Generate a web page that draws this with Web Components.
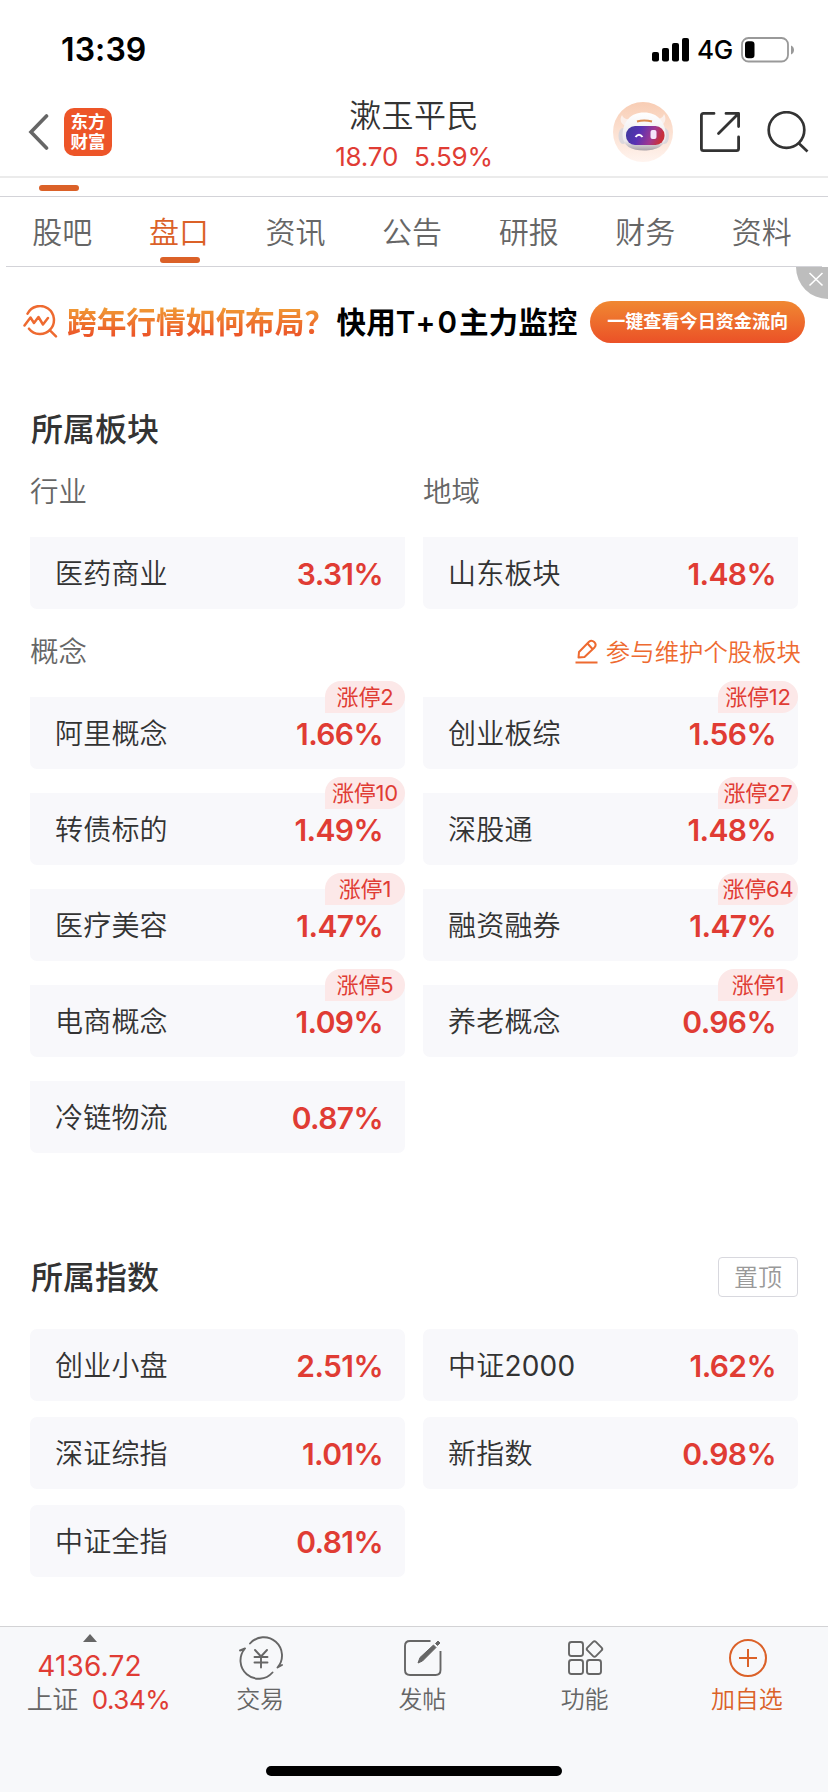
<!DOCTYPE html>
<html lang="zh-CN">
<head>
<meta charset="utf-8">
<title>漱玉平民</title>
<style>
html, body { margin: 0; }
body {
    width: 828px;
    height: 1792px;
    overflow: hidden;
    background: #fff;
    color: #333;
    font-family: Inter, "Noto Sans CJK SC", sans-serif;
}
</style>
</head>
<body>
<quote-page></quote-page>

<script>
"use strict";

// shared helper: opens the shadow root and fills it from a template
class BaseElement extends HTMLElement {
    constructor() {
        super();
        let tmpl = document.createElement('template');
        tmpl.innerHTML = this.render();
        this.attachShadow({mode: 'open'});
        this.shadowRoot.append(tmpl.content.cloneNode(true));
    }
}

class StatusBar extends BaseElement {
    render() {
        return `<style>
:host {
    display: flex;
    justify-content: space-between;
    align-items: center;
    box-sizing: border-box;
    height: 88px;
    padding: 11px 33px 0 61px;
    color: #000;
}
.time { padding-top: 1px; font-size: 32px; font-weight: 600; line-height: 40px; letter-spacing: 0.1px; }
.right { display: flex; align-items: center; gap: 8px; }
.net { padding-top: 1px; font-size: 26px; font-weight: 450; line-height: 30px; letter-spacing: -0.3px; }
svg { display: block; }
</style>
<span class="time">13:39</span>
<div class="right">
  <svg width="37" height="24" viewBox="0 0 37 24">
    <rect x="0" y="14" width="7" height="9.5" rx="2"/>
    <rect x="10" y="10" width="7" height="13.5" rx="2"/>
    <rect x="20" y="5" width="7" height="18.5" rx="2"/>
    <rect x="30" y="0" width="7" height="23.5" rx="2"/>
  </svg>
  <span class="net">4G</span>
  <svg width="54" height="26" viewBox="0 0 54 26">
    <rect x="1" y="1" width="46" height="23.5" rx="6.5" fill="none" stroke="#999" stroke-width="1.8"/>
    <rect x="4" y="4.200" width="9.500" height="17" rx="3.200"/>
    <path d="M50 8.500c4 1.600 4 7.400 0 9z" fill="#999"/>
  </svg>
</div>`;
    }
}

class AppHeader extends BaseElement {
    render() {
        return `<style>
:host {
    display: grid;
    grid-template-columns: 1fr auto 1fr;
    box-sizing: border-box;
    height: 90px;
    padding: 0 19px;
    border-bottom: 2px solid #ebebeb;
}
svg { display: block; }
.left { display: flex; align-items: center; gap: 15px; padding-left: 9px; }
.logo {
    display: grid;
    align-content: center;
    justify-content: center;
    width: 48px;
    height: 48px;
    border-radius: 10px;
    background: #ed5528;
    color: #fff;
    font-size: 17.5px;
    font-weight: 700;
    line-height: 20px;
}
.title { display: flex; flex-direction: column; align-items: center; padding-top: 8px; }
.name { font-size: 32px; line-height: 40px; font-weight: 350; letter-spacing: 0.4px; }
.price { display: flex; gap: 16px; margin-top: 5px; font-size: 26px; line-height: 32px; color: #e03c34; letter-spacing: -0.2px; }
.right { display: flex; justify-content: flex-end; align-items: center; gap: 26px; }
</style>
<div class="left">
  <svg width="21" height="36" viewBox="0 0 21 36"><path d="M18.500 2L3 18l15.500 16" fill="none" stroke="#666" stroke-width="3.600" stroke-linecap="round"/></svg>
  <div class="logo"><span>东方</span><span>财富</span></div>
</div>
<div class="title">
  <div class="name">漱玉平民</div>
  <div class="price"><span>18.70</span><span>5.59%</span></div>
</div>
<div class="right">
  <svg width="60" height="60" viewBox="0 0 60 60">
    <defs>
      <linearGradient id="bg" x2="0" y2="1"><stop offset="0" stop-color="#f8cdb4"/><stop offset="1" stop-color="#fff4ef"/></linearGradient>
      <linearGradient id="shell" x2="0" y2="1"><stop offset="0" stop-color="#fff"/><stop offset="0.75" stop-color="#ece9ec"/><stop offset="1" stop-color="#aaa2a8"/></linearGradient>
      <linearGradient id="visor" x2="1" y2="0.2"><stop offset="0" stop-color="#3d3a9c"/><stop offset="0.4" stop-color="#5832b4"/><stop offset="0.75" stop-color="#a03790"/><stop offset="1" stop-color="#c8303c"/></linearGradient>
    </defs>
    <circle cx="30" cy="30" r="30" fill="url(#bg)"/>
    <path d="M9 13c-3 5-1 9 4 11l5-7c-5 1-8-1-9-4zM51 12c3 5 1 10-4 12l-5-7c5 0 8-1 9-5z" fill="#fbefea"/>
    <ellipse cx="10" cy="34" rx="4.500" ry="8" fill="#dcd8dc"/>
    <ellipse cx="51.500" cy="34" rx="4.500" ry="8" fill="#dcd8dc"/>
    <path d="M31 10.500C17 10.500 10 20 9.500 33c0 11 9 15.500 21.500 15.500S53 44 53 33c-1-13-8-22.500-22-22.500z" fill="url(#shell)"/>
    <path d="M24 19.500q7-2 15 0" fill="none" stroke="#dc8b50" stroke-width="2"/>
    <rect x="13" y="24" width="38.500" height="19" rx="9" fill="url(#visor)"/>
    <path d="M22.500 35q3.500-4.500 7 0" fill="none" stroke="#fff" stroke-width="2"/>
    <rect x="37.500" y="28" width="6" height="9" rx="2" fill="#f4e4fa"/>
  </svg>
  <svg width="42" height="42" viewBox="0 0 42 42" fill="none" stroke="#333" stroke-width="2.800" stroke-linecap="round" stroke-linejoin="round">
    <path d="M15 2.400H4.500q-2.100 0-2.100 2.100V37.500q0 2.100 2.100 2.100H37.500q2.100 0 2.100-2.100V26"/>
    <path d="M27 2.400H39.600V15.500M39 3L19.500 22.500"/>
  </svg>
  <svg width="42" height="42" viewBox="0 0 42 42" fill="none" stroke="#333" stroke-width="2.700"><circle cx="19.500" cy="19" r="17.800"/><path d="M31.500 32L40.500 40.500"/></svg>
</div>`;
    }
}

class TabBar extends BaseElement {
    render() {
        return `<style>
:host { display: block; }
.prev { box-sizing: border-box; height: 19px; padding: 7px 0 0 39px; border-bottom: 1px solid #d3d3d8; }
.mark { width: 40px; height: 6px; margin-left: 2px; border-radius: 3px; background: #db6128; }
.prev .mark { margin-left: 0; }
nav {
    display: grid;
    grid-template-columns: repeat(7, 116.600px);
    box-sizing: border-box;
    height: 70px;
    margin: 0 6px;
    border-bottom: 1px solid #d3d3d8;
}
.tab {
    display: flex;
    flex-direction: column;
    align-items: center;
    gap: 5px;
    margin: 0 2px 0 -2px;
    padding-top: 15px;
    color: #666;
    font-size: 30px;
    font-weight: 350;
    line-height: 40px;
}
.on { color: #db6128; }
</style>
<div class="prev"><div class="mark"></div></div>
<nav>
  <div class="tab">股吧</div>
  <div class="tab on">盘口<div class="mark"></div></div>
  <div class="tab">资讯</div>
  <div class="tab">公告</div>
  <div class="tab">研报</div>
  <div class="tab">财务</div>
  <div class="tab">资料</div>
</nav>`;
    }
}

class PromoBanner extends BaseElement {
    render() {
        return `<style>
:host {
    display: flex;
    align-items: center;
    position: relative;
    box-sizing: border-box;
    height: 110px;
    padding: 0 23px;
}
svg { display: block; }
.ask {
    width: 269px;
    margin: -1px 1px 0 9px;
    white-space: nowrap;
    font-size: 29.7px;
    font-weight: 700;
    line-height: 40px;
    background: linear-gradient(#f09a34 15%, #ec5428 85%);
    -webkit-background-clip: text;
    color: transparent;
}
.say { width: 254px; margin-top: -1px; white-space: nowrap; font-size: 29.6px; font-weight: 700; line-height: 40px; color: #000; }
.say span { font-weight: 600; letter-spacing: 2px; }
.go {
    width: 215px;
    height: 42px;
    border-radius: 21px;
    background: linear-gradient(#f08832, #eb5127);
    color: #fff;
    font-size: 18.1px;
    font-weight: 700;
    line-height: 41px;
    text-align: center;
    white-space: nowrap;
}
.close { position: absolute; right: 0; top: 0; }
</style>
<svg width="35" height="34" viewBox="0 0 35 34" fill="none" stroke="#ee6a30" stroke-width="2.500" stroke-linecap="round" stroke-linejoin="round">
  <path d="M4.500 8.700A14 14 0 1 1 6 23.700M27 25.500L33 31.500"/>
  <path d="M1.500 20.500L7.500 12.500L11 18L15.500 12L20 19.500L25 13"/>
</svg>
<div class="ask">跨年行情如何布局？</div>
<div class="say">快用<span>T+0</span>主力监控</div>
<div class="go">一键查看今日资金流向</div>
<svg class="close" width="32" height="32" viewBox="0 0 32 32"><path d="M0 0H32V32A32 32 0 0 1 0 0z" fill="#bdbdbd"/><path d="M13.500 6L26.500 18.500M26.500 6L13.500 18.500" stroke="#fff" stroke-width="1.600"/></svg>`;
    }
}

// one plate or index: name, change in percent, optional limit-up count
class PlateCard extends BaseElement {
    static get observedAttributes() {
        return ['change', 'limit'];
    }

    render() {
        return `<style>
:host {
    display: flex;
    justify-content: space-between;
    align-items: center;
    position: relative;
    box-sizing: border-box;
    height: 72px;
    padding: 2px 22px 0 25px;
    border-radius: var(--card-radius, 0 0 7px 7px);
    background: #f8f8fb;
    font-size: 28px;
    font-weight: 350;
    line-height: 40px;
    letter-spacing: 0.2px;
}
::slotted(span) { font-weight: 400; }
.change { font-size: 30px; font-weight: 600; letter-spacing: -0.6px; color: #e03c34; }
.limit {
    position: absolute;
    right: 0;
    top: -16px;
    width: 80px;
    height: 32px;
    border-radius: 16px 16px 16px 0;
    background: #fce8e8;
    color: #e03c34;
    font-size: 22px;
    font-weight: 400;
    line-height: 33px;
    letter-spacing: -0.2px;
    text-align: center;
    white-space: nowrap;
}
.limit:empty { display: none; }
</style><span><slot></slot></span><span class="change"></span><span class="limit"></span>`;
    }

    attributeChangedCallback(name, old, value) {
        this.shadowRoot.querySelector('.' + name).textContent = name === 'limit' ? '涨停' + value : value;
    }
}

class CardGrid extends BaseElement {
    render() {
        return `<style>
:host { display: grid; grid-template-columns: 375px 375px; gap: var(--row-gap, 24px) 18px; }
</style><slot></slot>`;
    }
}

class PlateSection extends BaseElement {
    render() {
        return `<style>
:host { display: block; padding: 0 30px; }
h2 { margin: 0; padding: 33px 0 0 1px; font-size: 32px; font-weight: 500; line-height: 40px; }
.heads { display: grid; grid-template-columns: 375px 375px; gap: 18px; padding: 22px 0 25px; }
.label { color: #666; font-size: 28.5px; font-weight: 350; line-height: 40px; }
.row { display: flex; justify-content: space-between; align-items: center; margin-right: -3px; padding: 23px 0 25px; }
.edit { display: flex; align-items: center; gap: 8px; color: #ee6a30; font-size: 24.4px; font-weight: 350; line-height: 40px; }
svg { display: block; margin-top: -2px; }
</style>
<h2>所属板块</h2>
<div class="heads"><div class="label">行业</div><div class="label">地域</div></div>
<card-grid>
  <plate-card change="3.31%">医药商业</plate-card>
  <plate-card change="1.48%">山东板块</plate-card>
</card-grid>
<div class="row">
  <div class="label">概念</div>
  <div class="edit">
    <svg width="23" height="25" viewBox="0 0 23 25" fill="none" stroke="#ee6a30" stroke-width="2" stroke-linejoin="round"><path d="M0.500 23.500H22.500M3.500 18.500L4 13L14 2.800Q16.500 0.500 19.200 3T19.500 8.500L9.500 18zM12.500 4.500L17.500 10"/></svg>
    <span>参与维护个股板块</span>
  </div>
</div>
<card-grid>
  <plate-card change="1.66%" limit="2">阿里概念</plate-card>
  <plate-card change="1.56%" limit="12">创业板综</plate-card>
  <plate-card change="1.49%" limit="10">转债标的</plate-card>
  <plate-card change="1.48%" limit="27">深股通</plate-card>
  <plate-card change="1.47%" limit="1">医疗美容</plate-card>
  <plate-card change="1.47%" limit="64">融资融券</plate-card>
  <plate-card change="1.09%" limit="5">电商概念</plate-card>
  <plate-card change="0.96%" limit="1">养老概念</plate-card>
  <plate-card change="0.87%">冷链物流</plate-card>
</card-grid>`;
    }
}

class IndexSection extends BaseElement {
    render() {
        return `<style>
:host { display: block; padding: 104px 30px 0; --card-radius: 7px; --row-gap: 16px; }
.head { display: flex; justify-content: space-between; align-items: center; height: 40px; margin-bottom: 32px; }
h2 { margin: 0; padding: 2px 0 0 1px; font-size: 32px; font-weight: 500; line-height: 40px; }
.pin {
    box-sizing: border-box;
    width: 80px;
    height: 40px;
    border: 1px solid #d8d8de;
    border-radius: 4px;
    color: #999;
    font-size: 24px;
    font-weight: 350;
    line-height: 40px;
    text-align: center;
}
</style>
<div class="head"><h2>所属指数</h2><div class="pin">置顶</div></div>
<card-grid>
  <plate-card change="2.51%">创业小盘</plate-card>
  <plate-card change="1.62%">中证<span>2000</span></plate-card>
  <plate-card change="1.01%">深证综指</plate-card>
  <plate-card change="0.98%">新指数</plate-card>
  <plate-card change="0.81%">中证全指</plate-card>
</card-grid>`;
    }
}

class ToolItem extends BaseElement {
    render() {
        return `<style>
:host {
    display: flex;
    flex-direction: column;
    align-items: center;
    gap: 2px;
    padding-top: 9px;
    color: #666;
    font-size: 24px;
    font-weight: 350;
    line-height: 36px;
}
::slotted(svg) { margin-left: 2px; }
</style><slot name="icon"></slot><span><slot></slot></span>`;
    }
}

class BottomBar extends BaseElement {
    render() {
        return `<style>
:host {
    display: flex;
    flex-direction: column;
    justify-content: space-between;
    align-items: center;
    box-sizing: border-box;
    height: 166px;
    padding-bottom: 16px;
    border-top: 1px solid #d3d3d5;
    background: #f7f8fa;
}
.tools { display: grid; grid-template-columns: 179px repeat(4, 1fr); width: 828px; }
.index { display: flex; flex-direction: column; align-items: center; padding-top: 7px; color: #e03c34; }
.value { margin-top: 7px; font-size: 28px; line-height: 34px; letter-spacing: 0.2px; }
.sub { display: flex; gap: 14px; margin: 0 0 0 18px; font-size: 26px; line-height: 33px; letter-spacing: -0.5px; }
.sub span:first-child { color: #666; font-size: 26px; font-weight: 350; }
.home { width: 296px; height: 10px; border-radius: 5px; background: #000; }
.add { color: #db6128; }
svg { display: block; }
</style>
<div class="tools">
  <div class="index">
    <svg width="14" height="8" viewBox="0 0 14 8"><path d="M0 8L7 0L14 8z" fill="#666"/></svg>
    <div class="value">4136.72</div>
    <div class="sub"><span>上证</span><span>0.34%</span></div>
  </div>
  <tool-item>
    <svg slot="icon" width="44" height="44" viewBox="0 0 44 44" fill="none" stroke="#666" stroke-width="1.900" stroke-linecap="round" stroke-linejoin="round">
      <path d="M11 7.500A18 18 0 0 1 38.500 31.500L43 29M33.500 36.500A18 18 0 0 1 6 12.500L1 14.500"/>
      <path d="M16 14L22 20.500L28 14M22 20.500V31.500M15.500 21H28.500M15.500 26.500H28.500"/>
    </svg>交易</tool-item>
  <tool-item>
    <svg slot="icon" width="44" height="44" viewBox="0 0 44 44" fill="none" stroke="#666" stroke-width="1.900">
      <path d="M29.500 5H9Q4 5 4 10V34Q4 39 9 39H34.500Q39.500 39 39.500 34V15"/>
      <path d="M17 27l2-5.500L32.500 9l2.500 2.500L21.500 25zM34.500 7.500l2.500-2.500 2 2-2.500 2.500z" fill="#666" stroke-width="1"/>
    </svg>发帖</tool-item>
  <tool-item>
    <svg slot="icon" width="44" height="44" viewBox="0 0 44 44" fill="none" stroke="#666" stroke-width="1.900">
      <rect x="5" y="6" width="14" height="14" rx="2.500"/>
      <rect x="5" y="24" width="14" height="14" rx="2.500"/>
      <rect x="23" y="24" width="14" height="14" rx="2.500"/>
      <rect x="24.500" y="7" width="12" height="12" rx="2" transform="rotate(45 30.500 13)"/>
    </svg>功能</tool-item>
  <tool-item class="add">
    <svg slot="icon" width="44" height="44" viewBox="0 0 44 44" fill="none" stroke="#db6128" stroke-width="2"><circle cx="22" cy="22" r="18"/><path d="M22 13V31M13 22H31"/></svg>加自选</tool-item>
</div>
<div class="home"></div>`;
    }
}

class QuotePage extends BaseElement {
    render() {
        return `<style>
:host { display: flex; flex-direction: column; height: 1792px; }
main { flex: 1; min-height: 0; }
</style>
<status-bar></status-bar>
<app-header></app-header>
<tab-bar></tab-bar>
<main>
  <promo-banner></promo-banner>
  <plate-section></plate-section>
  <index-section></index-section>
</main>
<bottom-bar></bottom-bar>`;
    }
}

window.customElements.define('status-bar', StatusBar);
window.customElements.define('app-header', AppHeader);
window.customElements.define('tab-bar', TabBar);
window.customElements.define('promo-banner', PromoBanner);
window.customElements.define('plate-card', PlateCard);
window.customElements.define('card-grid', CardGrid);
window.customElements.define('plate-section', PlateSection);
window.customElements.define('index-section', IndexSection);
window.customElements.define('tool-item', ToolItem);
window.customElements.define('bottom-bar', BottomBar);
window.customElements.define('quote-page', QuotePage);
</script>
</body>
</html>
